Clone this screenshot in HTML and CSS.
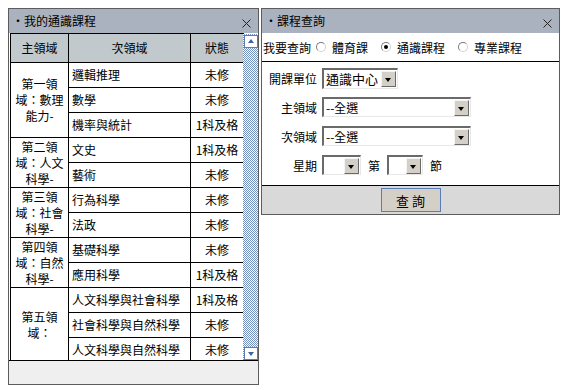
FILE: index.html
```html
<!DOCTYPE html>
<html lang="zh-Hant">
<head>
  <meta charset="UTF-8" />
  <title>通識課程</title>
  <link rel="stylesheet" href="styles.css">
</head>
<body>
  <div class="desk">
    <!-- 我的通識課程 -->
    <div class="panel panel-left">
      <div class="panel-title">
        <span>・我的通識課程</span>
        <svg class="close" width="9" height="9" viewBox="0 0 9 9"><path d="M0.5 0.5L8.5 8.5M8.5 0.5L0.5 8.5" stroke="#222" stroke-width="1"/></svg>
      </div>
      <div class="scroll-area">
        <div class="table-wrap">
          <table class="course-table">
            <thead>
              <tr><th class="c-main">主領域</th><th class="c-sub">次領域</th><th class="c-state">狀態</th></tr>
            </thead>
            <tbody>
              <tr><td rowspan="3" class="main">第一領域：數理能力-</td><td class="sub">邏輯推理</td><td class="state">未修</td></tr>
              <tr><td class="sub">數學</td><td class="state">未修</td></tr>
              <tr><td class="sub">機率與統計</td><td class="state">1科及格</td></tr>
              <tr><td rowspan="2" class="main">第二領域：人文科學-</td><td class="sub">文史</td><td class="state">1科及格</td></tr>
              <tr><td class="sub">藝術</td><td class="state">未修</td></tr>
              <tr><td rowspan="2" class="main">第三領域：社會科學-</td><td class="sub">行為科學</td><td class="state">未修</td></tr>
              <tr><td class="sub">法政</td><td class="state">未修</td></tr>
              <tr><td rowspan="2" class="main">第四領域：自然科學-</td><td class="sub">基礎科學</td><td class="state">未修</td></tr>
              <tr><td class="sub">應用科學</td><td class="state">1科及格</td></tr>
              <tr><td rowspan="3" class="main">第五領域：</td><td class="sub">人文科學與社會科學</td><td class="state">1科及格</td></tr>
              <tr><td class="sub">社會科學與自然科學</td><td class="state">未修</td></tr>
              <tr><td class="sub">人文科學與自然科學</td><td class="state">未修</td></tr>
            </tbody>
          </table>
        </div>
        <div class="scrollbar">
          <span class="sb-btn up"></span>
          <span class="sb-track"></span>
          <span class="sb-btn down"></span>
        </div>
      </div>
      <div class="panel-foot"></div>
    </div>

    <!-- 課程查詢 -->
    <div class="panel panel-right">
      <div class="panel-title">
        <span>・課程查詢</span>
        <svg class="close" width="9" height="9" viewBox="0 0 9 9"><path d="M0.5 0.5L8.5 8.5M8.5 0.5L0.5 8.5" stroke="#222" stroke-width="1"/></svg>
      </div>
      <div class="query-type">
        <span class="q-label">我要查詢</span>
        <span class="radio"></span><span class="r-text">體育課</span>
        <span class="radio checked"></span><span class="r-text">通識課程</span>
        <span class="radio"></span><span class="r-text">專業課程</span>
      </div>
      <div class="query-form">
        <div class="form-row">
          <span class="f-label">開課單位</span>
          <span class="select w-unit"><span class="val">通識中心</span><span class="arrow"></span></span>
        </div>
        <div class="form-row">
          <span class="f-label">主領域</span>
          <span class="select w-wide"><span class="val">--全選</span><span class="arrow"></span></span>
        </div>
        <div class="form-row">
          <span class="f-label">次領域</span>
          <span class="select w-wide"><span class="val">--全選</span><span class="arrow"></span></span>
        </div>
        <div class="form-row">
          <span class="f-label">星期</span>
          <span class="inline-group">
            <span class="select w-day"><span class="val"></span><span class="arrow"></span></span>
            <span>第</span>
            <span class="select w-period"><span class="val"></span><span class="arrow"></span></span>
            <span>節</span>
          </span>
        </div>
      </div>
      <div class="query-foot">
        <button class="btn">查 詢</button>
      </div>
    </div>
  </div>
</body>
</html>
```

FILE: styles.css
```css
* {
  margin: 0;
  padding: 0;
  box-sizing: border-box;
}

body {
  background: #fff;
  font-family: "Noto Sans CJK TC", "Noto Sans CJK SC", sans-serif;
  font-size: 12px;
  color: #000;
}

.desk {
  display: flex;
  align-items: flex-start;
  gap: 2px;
  padding: 8px;
}

/* ventanas */
.panel {
  border: 1px solid #5c5c5c;
  background: #fff;
}

.panel-left {
  width: 251px;
}

.panel-right {
  width: 300px;
}

.panel-title {
  height: 24px;
  background: #aab2bf;
  display: flex;
  justify-content: space-between;
  align-items: center;
  padding: 0 7px 0 3px;
  font-size: 12px;
  line-height: 1;
}

.panel-title .close {
  margin-top: 5px;
}

/* tabla con scroll */
.scroll-area {
  height: 327px;
  display: flex;
  overflow: hidden;
  padding-left: 1px;
}

.table-wrap {
  width: 233px;
}

.course-table {
  border-collapse: collapse;
  width: 233px;
  table-layout: fixed;
}

.course-table th,
.course-table td {
  border: 1px solid #000;
  line-height: 16px;
}

.course-table th {
  height: 29px;
  background: #c1c9cc;
  font-weight: normal;
  font-size: 12px;
}

.c-main { width: 58px; }
.c-sub { width: 122px; }
.c-state { width: 53px; }

.course-table td {
  height: 25px;
}

.course-table .main {
  text-align: center;
  padding: 0 2px;
  line-height: 16px;
}

.course-table .sub {
  padding-left: 3px;
}

.course-table .state {
  text-align: center;
}

.scrollbar {
  width: 15px;
  margin-top: 1px;
  display: flex;
  flex-direction: column;
  background-image: repeating-conic-gradient(#7391c0 0 25%, #fff 0 50%);
  background-size: 2px 2px;
}

.sb-track {
  flex: 1;
}

.sb-btn {
  height: 13px;
  width: 14px;
  margin: 1px 0 0 1px;
  background: #fff;
  border: 1px solid #5b7db4;
  position: relative;
}

.sb-btn::after {
  content: "";
  position: absolute;
  left: 3px;
  border-left: 3.5px solid transparent;
  border-right: 3.5px solid transparent;
}

.sb-btn.up::after {
  top: 3px;
  border-bottom: 4px solid #3e64a0;
}

.sb-btn.down {
  margin: 0 0 0 1px;
}

.sb-btn.down::after {
  top: 4px;
  border-top: 4px solid #3e64a0;
}

.panel-foot {
  height: 24px;
  background: #efefef;
  border-top: 1px solid #000;
}

/* consulta */
.query-type {
  height: 29px;
  display: flex;
  align-items: center;
  border-bottom: 1px solid #000;
  padding-left: 1px;
}

.q-label {
  margin-right: 5px;
}

.radio {
  width: 10px;
  height: 10px;
  border-radius: 50%;
  border: 1px solid;
  border-color: #7c7c7c #d2d2d2 #d2d2d2 #7c7c7c;
  background: #fff;
  margin-right: 6px;
  position: relative;
}

.radio.checked::after {
  content: "";
  position: absolute;
  left: 2px;
  top: 2px;
  width: 4px;
  height: 4px;
  border-radius: 50%;
  background: #000;
}

.r-text {
  margin-right: 13px;
}

.query-form {
  padding: 2px 0 6px;
  border-bottom: 1px solid #000;
  display: flex;
  flex-direction: column;
  gap: 1px;
}

.form-row {
  height: 28px;
  display: grid;
  grid-template-columns: 55px auto;
  column-gap: 5px;
  align-items: center;
  justify-items: start;
}

.f-label {
  justify-self: end;
}

.inline-group {
  display: flex;
  align-items: center;
  gap: 7px;
}

.select {
  height: 20px;
  display: flex;
  align-items: center;
  background: #fff;
  border-top: 2px solid #6a6a6a;
  border-left: 2px solid #6a6a6a;
  border-bottom: 1px solid #e8e8e8;
  border-right: 1px solid #e8e8e8;
  line-height: 1;
}

.select .val {
  flex: 1;
  padding-left: 2px;
  white-space: nowrap;
}

.select .arrow {
  width: 15px;
  height: 16px;
  margin-right: 1px;
  background: #d4d0c8;
  border: 1px solid;
  border-color: #f4f4f4 #6a6a6a #6a6a6a #f4f4f4;
  position: relative;
}

.select .arrow::after {
  content: "";
  position: absolute;
  left: 3px;
  top: 6px;
  border-left: 3.5px solid transparent;
  border-right: 3.5px solid transparent;
  border-top: 4px solid #000;
}

.w-unit { width: 76px; height: 21px; font-size: 13px; }
.w-wide { width: 149px; }
.w-day { width: 39px; }
.w-period { width: 36px; }

.query-foot {
  height: 28px;
  background: #d9d9d9;
  display: flex;
  justify-content: center;
  align-items: center;
}

.btn {
  width: 60px;
  height: 24px;
  background: #d4d0c8;
  border: 1px solid #5b7db5;
  font-family: inherit;
  font-size: 13px;
}
```
